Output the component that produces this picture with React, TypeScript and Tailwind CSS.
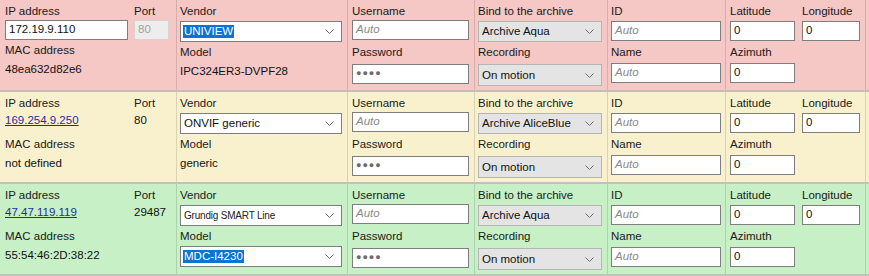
import React from "react";

type Row = {
  bg: string;
  ip: string;
  ipEditable: boolean;
  port: string;
  mac: string;
  vendor: string;
  vendorHl: boolean;
  vendorSmall: boolean;
  model: string;
  modelSelect: boolean;
  archive: string;
};

const rows: Row[] = [
  {
    bg: "bg-[#f5c7c5]",
    ip: "172.19.9.110",
    ipEditable: true,
    port: "80",
    mac: "48ea632d82e6",
    vendor: "UNIVIEW",
    vendorHl: true,
    vendorSmall: false,
    model: "IPC324ER3-DVPF28",
    modelSelect: false,
    archive: "Archive Aqua",
  },
  {
    bg: "bg-[#f9f1cd]",
    ip: "169.254.9.250",
    ipEditable: false,
    port: "80",
    mac: "not defined",
    vendor: "ONVIF generic",
    vendorHl: false,
    vendorSmall: false,
    model: "generic",
    modelSelect: false,
    archive: "Archive AliceBlue",
  },
  {
    bg: "bg-[#c7f0c7]",
    ip: "47.47.119.119",
    ipEditable: false,
    port: "29487",
    mac: "55:54:46:2D:38:22",
    vendor: "Grundig SMART Line",
    vendorHl: false,
    vendorSmall: true,
    model: "MDC-I4230",
    modelSelect: true,
    archive: "Archive Aqua",
  },
];

function Chevron() {
  return (
    <svg width="9" height="5" viewBox="0 0 9 5" className="shrink-0">
      <path d="M0.5 0.5 L4.5 4.5 L8.5 0.5" fill="none" stroke="#6b6b6b" strokeWidth="1" />
    </svg>
  );
}

function Input({ w, children, placeholder }: { w: string; children?: React.ReactNode; placeholder?: string }) {
  return (
    <div className={`${w} h-[20px] bg-white border border-[#7e7e7e] flex items-center pl-[3px] overflow-hidden whitespace-nowrap`}>
      {placeholder ? <span className="italic text-[#8a8a8a] font-light">{placeholder}</span> : children}
    </div>
  );
}

function Select({
  w,
  value,
  gray,
  hl,
  small,
  tall,
}: {
  w: string;
  value: string;
  gray?: boolean;
  hl?: boolean;
  small?: boolean;
  tall?: boolean;
}) {
  return (
    <div
      className={`${w} ${tall ? "h-[22px]" : "h-[21px]"} border flex items-center justify-between pl-[2px] pr-[7px] ${
        gray ? "bg-[#e4e4e4] border-[#b5b5b5]" : "bg-white border-[#7e7e7e]"
      }`}
    >
      <span
        className={`whitespace-nowrap overflow-hidden px-[1px] leading-[13px] ${hl ? "bg-[#0a74d4] text-white" : ""} ${
          small ? "text-[10px] tracking-[-0.2px] font-medium text-[#222]" : ""
        }`}
      >
        {value}
      </span>
      <Chevron />
    </div>
  );
}

function Label({ children }: { children: React.ReactNode }) {
  return <div className="h-[14px] leading-[14px] text-[#1a1a1a] whitespace-nowrap">{children}</div>;
}

function CameraRow({ r }: { r: Row }) {
  return (
    <div
      className={`${r.bg} h-[92px] border-b-2 border-[#c4bfba] grid grid-cols-[176px_171px_127px_133px_118px_141px_3px]`}
    >
      {/* IP / port / MAC */}
      <div className="pl-[5px] pt-[4px]">
        <div className="flex">
          <div className="w-[129px]">
            <Label>IP address</Label>
            {r.ipEditable ? (
              <div className="mt-[2px]">
                <Input w="w-[123px]">{r.ip}</Input>
              </div>
            ) : (
              <div className="mt-[3px] leading-[14px] text-[#1f2e9e] underline">{r.ip}</div>
            )}
          </div>
          <div>
            <Label>Port</Label>
            {r.ipEditable ? (
              <div className="mt-[2px] w-[35px] h-[20px] bg-[#ededed] border border-[#d4d4d4] flex items-center pl-[3px] text-[#a3a3a3]">
                {r.port}
              </div>
            ) : (
              <div className="mt-[3px] leading-[14px]">{r.port}</div>
            )}
          </div>
        </div>
        <div className={r.ipEditable ? "mt-[3px]" : "mt-[10px]"}>
          <Label>MAC address</Label>
          <div className="mt-[5px] leading-[14px]">{r.mac}</div>
        </div>
      </div>

      {/* Vendor / Model */}
      <div className="border-l border-[#00000020] pl-[3px] pt-[4px]">
        <Label>Vendor</Label>
        <div className="mt-[3px]">
          <Select w="w-[162px]" value={r.vendor} hl={r.vendorHl} small={r.vendorSmall} />
        </div>
        <div className="mt-[3px]">
          <Label>Model</Label>
          {r.modelSelect ? (
            <div className="mt-[3px]">
              <Select w="w-[162px]" value={r.model} hl />
            </div>
          ) : (
            <div className="mt-[5px] leading-[14px]">{r.model}</div>
          )}
        </div>
      </div>

      {/* Username / Password */}
      <div className="border-l border-[#00000020] pl-[4px] pt-[4px]">
        <Label>Username</Label>
        <div className="mt-[2px]">
          <Input w="w-[117px]" placeholder="Auto" />
        </div>
        <div className="mt-[5px]">
          <Label>Password</Label>
          <div className="mt-[5px]">
            <Input w="w-[117px]">
              <span className="text-[#6a6a6a] text-[9px] tracking-[1px]">●●●●</span>
            </Input>
          </div>
        </div>
      </div>

      {/* Archive / Recording */}
      <div className="border-l border-[#00000020] pl-[3px] pt-[4px]">
        <Label>Bind to the archive</Label>
        <div className="mt-[3px]">
          <Select w="w-[124px]" value={r.archive} gray />
        </div>
        <div className="mt-[3px]">
          <Label>Recording</Label>
          <div className="mt-[5px]">
            <Select w="w-[124px]" value="On motion" gray tall />
          </div>
        </div>
      </div>

      {/* ID / Name */}
      <div className="border-l border-[#00000020] pl-[3px] pt-[4px]">
        <Label>ID</Label>
        <div className="mt-[3px]">
          <Input w="w-[110px]" placeholder="Auto" />
        </div>
        <div className="mt-[4px]">
          <Label>Name</Label>
          <div className="mt-[4px]">
            <Input w="w-[110px]" placeholder="Auto" />
          </div>
        </div>
      </div>

      {/* Lat / Long / Azimuth */}
      <div className="border-l border-r border-[#00000020] pl-[4px] pt-[4px]">
        <div className="flex gap-[7px]">
          <div>
            <Label>Latitude</Label>
            <div className="mt-[3px]">
              <Input w="w-[65px]">0</Input>
            </div>
          </div>
          <div>
            <Label>Longitude</Label>
            <div className="mt-[3px]">
              <Input w="w-[58px]">0</Input>
            </div>
          </div>
        </div>
        <div className="mt-[4px]">
          <Label>Azimuth</Label>
          <div className="mt-[4px]">
            <Input w="w-[65px]">0</Input>
          </div>
        </div>
      </div>
      <div />
    </div>
  );
}

export default function App() {
  return (
    <div className="w-[869px] h-[276px] overflow-hidden bg-[#f0f0f0] text-[11.5px] text-[#111] font-['Liberation_Sans',Arial,sans-serif]">
      {rows.map((r, i) => (
        <CameraRow key={i} r={r} />
      ))}
    </div>
  );
}
